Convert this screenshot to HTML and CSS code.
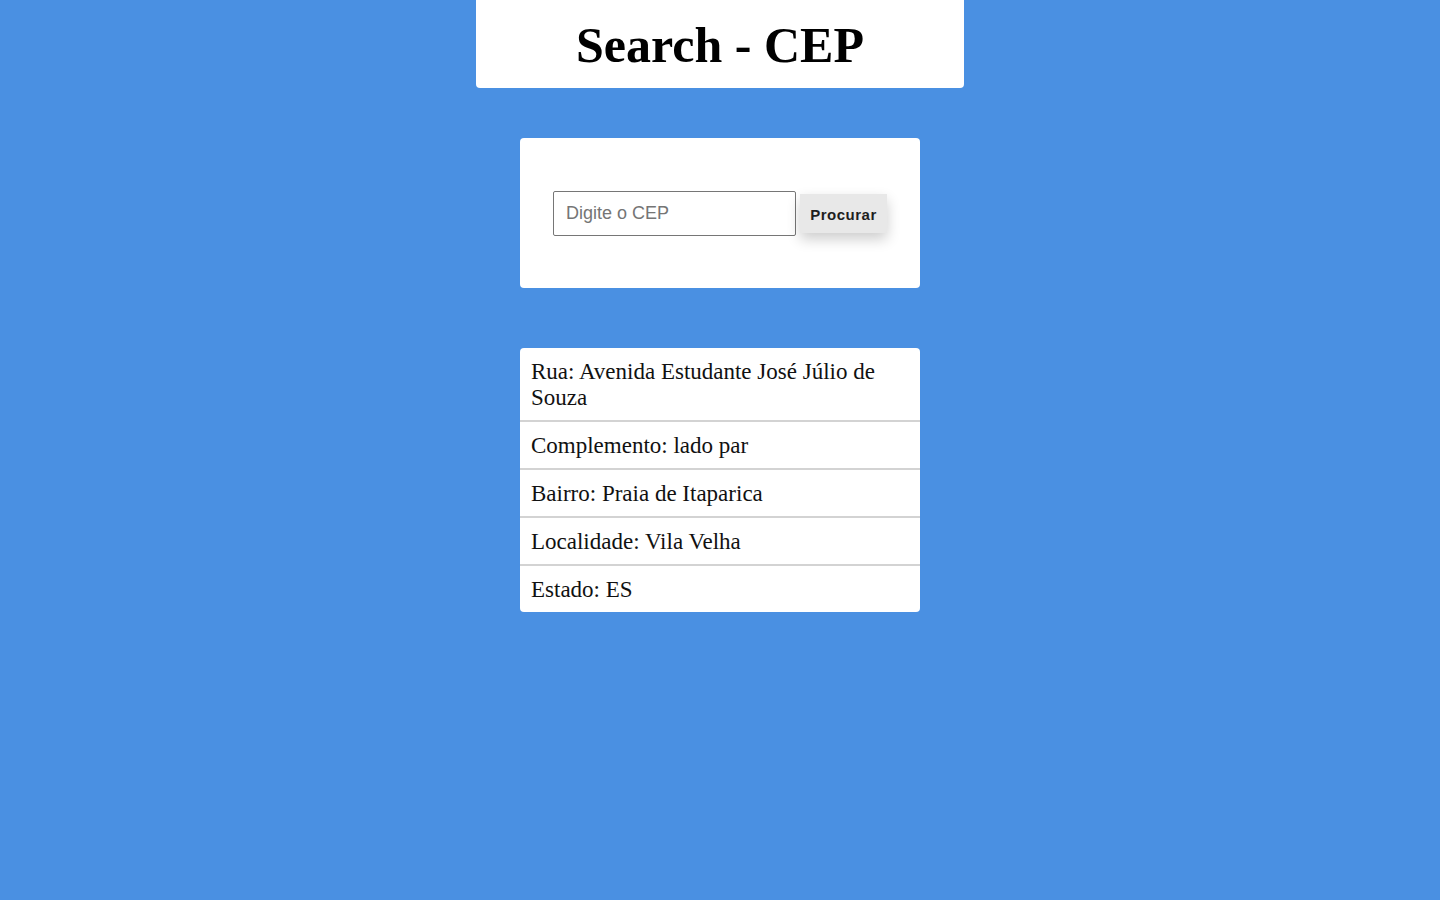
FILE: index.html
```html
<!DOCTYPE html>
<html lang="pt-BR">
<head>
<meta charset="UTF-8">
<title>Search - CEP</title>
<link rel="stylesheet" href="styles.css">
</head>
<body>
<main class="page">
  <header class="header">
    <h1 class="title">Search - CEP</h1>
  </header>
  <section class="search-card">
    <input class="cep-input" type="text" placeholder="Digite o CEP">
    <button class="search-btn" type="button">Procurar</button>
  </section>
  <ul class="result">
    <li class="result-item">Rua: Avenida Estudante José Júlio de Souza</li>
    <li class="result-item">Complemento: lado par</li>
    <li class="result-item">Bairro: Praia de Itaparica</li>
    <li class="result-item">Localidade: Vila Velha</li>
    <li class="result-item">Estado: ES</li>
  </ul>
</main>
</body>
</html>
```
FILE: styles.css
```css
html, body {
  margin: 0;
  padding: 0;
}
body {
  background: #4a90e2;
  font-family: "Liberation Serif", "Times New Roman", serif;
  min-height: 900px;
}
.page {
  display: flex;
  flex-direction: column;
  align-items: center;
}
.header {
  width: 488px;
  height: 88px;
  background: #fff;
  border-radius: 0 0 4px 4px;
  display: flex;
  align-items: center;
  justify-content: center;
}
.title {
  margin: 0;
  padding-top: 2px;
  font-size: 50px;
  font-weight: bold;
  color: #000;
  line-height: 1;
}
.search-card {
  margin-top: 50px;
  width: 400px;
  height: 150px;
  background: #fff;
  border-radius: 4px;
  display: flex;
  align-items: center;
  justify-content: center;
  gap: 4px;
  box-sizing: border-box;
}
.cep-input {
  width: 243px;
  height: 45px;
  box-sizing: border-box;
  border: 1px solid #767676;
  border-radius: 2px;
  padding: 0 12px;
  font-family: "Liberation Sans", Arial, sans-serif;
  font-size: 18px;
  color: #000;
  outline: none;
}
.cep-input::placeholder {
  color: #757575;
}
.search-btn {
  width: 87px;
  height: 39px;
  box-sizing: border-box;
  border: none;
  background: #e8e8e8;
  font-family: "Liberation Sans", Arial, sans-serif;
  font-weight: bold;
  font-size: 15px;
  letter-spacing: 0.5px;
  color: #1e1e1e;
  padding: 2px 0 0;
  box-shadow: 0 6px 14px rgba(0, 0, 0, 0.2);
  cursor: pointer;
}
.result {
  list-style: none;
  margin: 60px 0 0;
  padding: 0;
  width: 400px;
  background: #fff;
  border-radius: 4px;
  overflow: hidden;
}
.result-item {
  padding: 11px 11px 9px;
  font-size: 23px;
  line-height: 26px;
  color: #111;
  border-bottom: 2px solid #d3d3d3;
}
.result-item:last-child {
  border-bottom: none;
}
```
